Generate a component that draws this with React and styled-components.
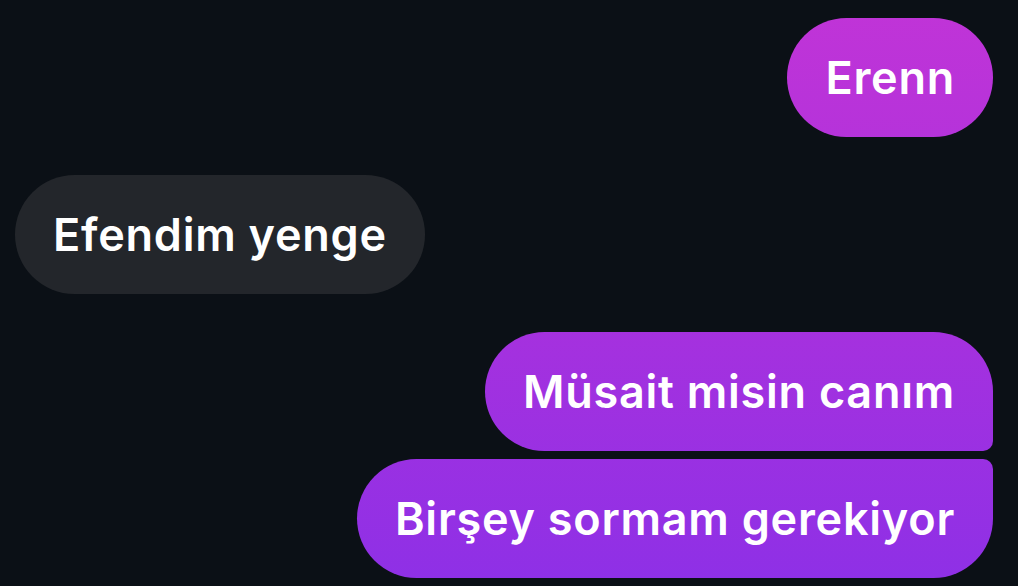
import React from 'react';
import styled, { createGlobalStyle } from 'styled-components';

const GlobalStyle = createGlobalStyle`
  html, body {
    margin: 0;
    padding: 0;
    background: #0b1016;
  }
  body {
    font-family: Inter, "Noto Sans", "Liberation Sans", sans-serif;
    -webkit-font-smoothing: antialiased;
  }
`;

// Chat data, grouped by sender
const groups = [
  { mine: true, messages: ['Erenn'] },
  { mine: false, messages: ['Efendim yenge'] },
  { mine: true, messages: ['Müsait misin canım', 'Birşey sormam gerekiyor'] }
];

const Thread = styled.div`
  width: 1018px;
  height: 586px;
  box-sizing: border-box;
  padding: 18px 25px 0 15px;
  display: flex;
  flex-direction: column;
  gap: 38px;
  overflow: hidden;
  background: #0b1016;
`;

const Group = styled.div`
  display: flex;
  flex-direction: column;
  align-items: ${p => (p.$mine ? 'flex-end' : 'flex-start')};
  gap: 8px;
`;

const Bubble = styled.div`
  height: 119px;
  box-sizing: border-box;
  padding: 0 38px;
  display: flex;
  align-items: center;
  color: #ffffff;
  font-size: 45px;
  font-weight: 600;
  letter-spacing: 0.75px;
  white-space: nowrap;
  border-radius: ${p => p.$radius};
  background: ${p =>
    p.$mine
      ? 'linear-gradient(180deg, #c134d7 0%, #a631de 55%, #8e30e6 100%) fixed'
      : '#23262b'};
`;

const radiusFor = (mine, index, count) => {
  const big = '60px';
  const small = '10px';
  if (count === 1) return big;
  const top = index === 0 ? big : small;
  const bottom = index === count - 1 ? big : small;
  return mine
    ? `${big} ${top} ${bottom} ${big}`
    : `${top} ${big} ${big} ${bottom}`;
};

const App = () => {
  return (
    <>
      <GlobalStyle />
      <Thread>
        {groups.map((group, gi) => (
          <Group key={gi} $mine={group.mine}>
            {group.messages.map((text, i) => (
              <Bubble
                key={i}
                $mine={group.mine}
                $radius={radiusFor(group.mine, i, group.messages.length)}
              >
                {text}
              </Bubble>
            ))}
          </Group>
        ))}
      </Thread>
    </>
  );
};

export default App;
